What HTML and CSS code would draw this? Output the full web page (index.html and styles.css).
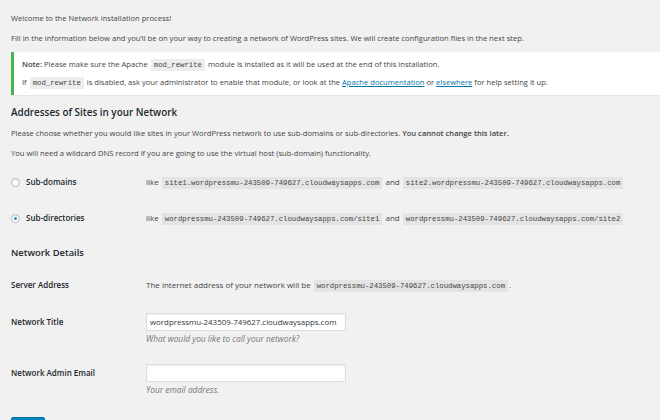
FILE: index.html
```html
<!DOCTYPE html>
<html lang="en">
<head>
    <meta charset="UTF-8">
    <title>Create a Network of WordPress Sites</title>
    <link rel="stylesheet" href="styles.css">
</head>
<body>
    <div class="wrap">
        <p>Welcome to the Network installation process!</p>
        <p>Fill in the information below and you&#8217;ll be on your way to creating a network of WordPress sites. We will create configuration files in the next step.</p>

        <div class="notice">
            <p><strong>Note:</strong> Please make sure the Apache <code>mod_rewrite</code> module is installed as it will be used at the end of this installation.</p>
            <p>If <code>mod_rewrite</code> is disabled, ask your administrator to enable that module, or look at the <a href="#">Apache documentation</a> or <a href="#">elsewhere</a> for help setting it up.</p>
        </div>

        <h2>Addresses of Sites in your Network</h2>
        <p>Please choose whether you would like sites in your WordPress network to use sub-domains or sub-directories. <strong>You cannot change this later.</strong></p>
        <p>You will need a wildcard DNS record if you are going to use the virtual host (sub-domain) functionality.</p>

        <div class="form-table choices">
            <div class="row choice">
                <label class="th"><input type="radio" name="subdomain_install" value="1"> Sub-domains</label>
                <div class="td">like <code>site1.wordpressmu-243509-749627.cloudwaysapps.com</code> and <code>site2.wordpressmu-243509-749627.cloudwaysapps.com</code></div>
            </div>
            <div class="row choice">
                <label class="th"><input type="radio" name="subdomain_install" value="0" checked> Sub-directories</label>
                <div class="td">like <code>wordpressmu-243509-749627.cloudwaysapps.com/site1</code> and <code>wordpressmu-243509-749627.cloudwaysapps.com/site2</code></div>
            </div>
        </div>

        <h3>Network Details</h3>
        <div class="form-table">
            <div class="row">
                <div class="th">Server Address</div>
                <div class="td">The internet address of your network will be <code>wordpressmu-243509-749627.cloudwaysapps.com</code>.</div>
            </div>
            <div class="row field">
                <label class="th" for="sitename">Network Title</label>
                <div class="td">
                    <input type="text" id="sitename" name="sitename" value="wordpressmu-243509-749627.cloudwaysapps.com">
                    <p class="description">What would you like to call your network?</p>
                </div>
            </div>
            <div class="row field">
                <label class="th" for="email">Network Admin Email</label>
                <div class="td">
                    <input type="text" id="email" name="email" value="">
                    <p class="description">Your email address.</p>
                </div>
            </div>
        </div>

        <button type="submit" class="button-primary">Install</button>
    </div>
</body>
</html>
```

FILE: styles.css
```css
body {
    background-color: #f1f1f1;
    color: #444;
    font-family: "Open Sans", sans-serif;
    font-size: 7.6px;
    line-height: 12px;
    margin: 0;
    padding: 0;
}
.wrap {
    padding: 12px 0 0 11px;
}
p {
    margin: 0 0 8px 0;
}
strong {
    font-weight: 600;
}
code {
    font-family: "Liberation Mono", monospace;
    font-size: 7.3px;
    background-color: #e4e4e4;
    padding: 2px 3px;
    margin: 0 1px;
}
a {
    color: #0073aa;
}
/* Note box about mod_rewrite */
.notice {
    background-color: #fff;
    border-left: 3px solid #46b450;
    box-shadow: 0 1px 1px rgba(0, 0, 0, 0.04);
    padding: 6px 8px;
    margin-bottom: 10px;
}
.notice p {
    margin: 0;
}
.notice p + p {
    margin-top: 5px;
}
.notice code {
    background-color: #ededed;
}
h2 {
    font-size: 9.9px;
    font-weight: 600;
    line-height: 14px;
    color: #23282d;
    margin: 0 0 8px 0;
}
h3 {
    font-size: 9.4px;
    font-weight: 600;
    line-height: 14px;
    color: #23282d;
    margin: 10px 0 7px 0;
}
.choices {
    margin-top: -3px;
}
.row {
    display: grid;
    grid-template-columns: 135px 1fr;
    align-items: center;
    height: 36px;
}
.th {
    font-size: 8px;
    font-weight: 600;
    color: #23282d;
    display: flex;
    align-items: center;
}
.choice .th {
    gap: 6px;
}
.td {
    font-size: 8px;
}
input[type="radio"] {
    appearance: none;
    width: 9px;
    height: 9px;
    margin: 0;
    border: 1px solid #b4b9be;
    border-radius: 50%;
    background-color: #fff;
    box-shadow: inset 0 1px 1px rgba(0, 0, 0, 0.1);
    display: grid;
    place-items: center;
}
input[type="radio"]:checked::before {
    content: "";
    width: 3px;
    height: 3px;
    border-radius: 50%;
    background-color: #1e8cbe;
}
.field {
    align-items: start;
    height: auto;
    padding: 10px 0 9px 0;
}
.field .th {
    padding-top: 3px;
}
input[type="text"] {
    box-sizing: border-box;
    width: 200px;
    height: 18px;
    margin: 0;
    padding: 0 3px;
    border: 1px solid #ddd;
    box-shadow: inset 0 1px 2px rgba(0, 0, 0, 0.07);
    background-color: #fff;
    color: #32373c;
    font-family: "Open Sans", sans-serif;
    font-size: 7.9px;
}
.description {
    font-style: italic;
    font-size: 8.4px;
    color: #777;
    margin: 2px 0 0 0;
}
.button-primary {
    margin-top: 12px;
    background-color: #0085ba;
    border: 1px solid #0073aa;
    border-radius: 2px;
    color: #fff;
    font-family: "Open Sans", sans-serif;
    font-size: 7.6px;
    width: 34px;
    height: 17px;
}
```
